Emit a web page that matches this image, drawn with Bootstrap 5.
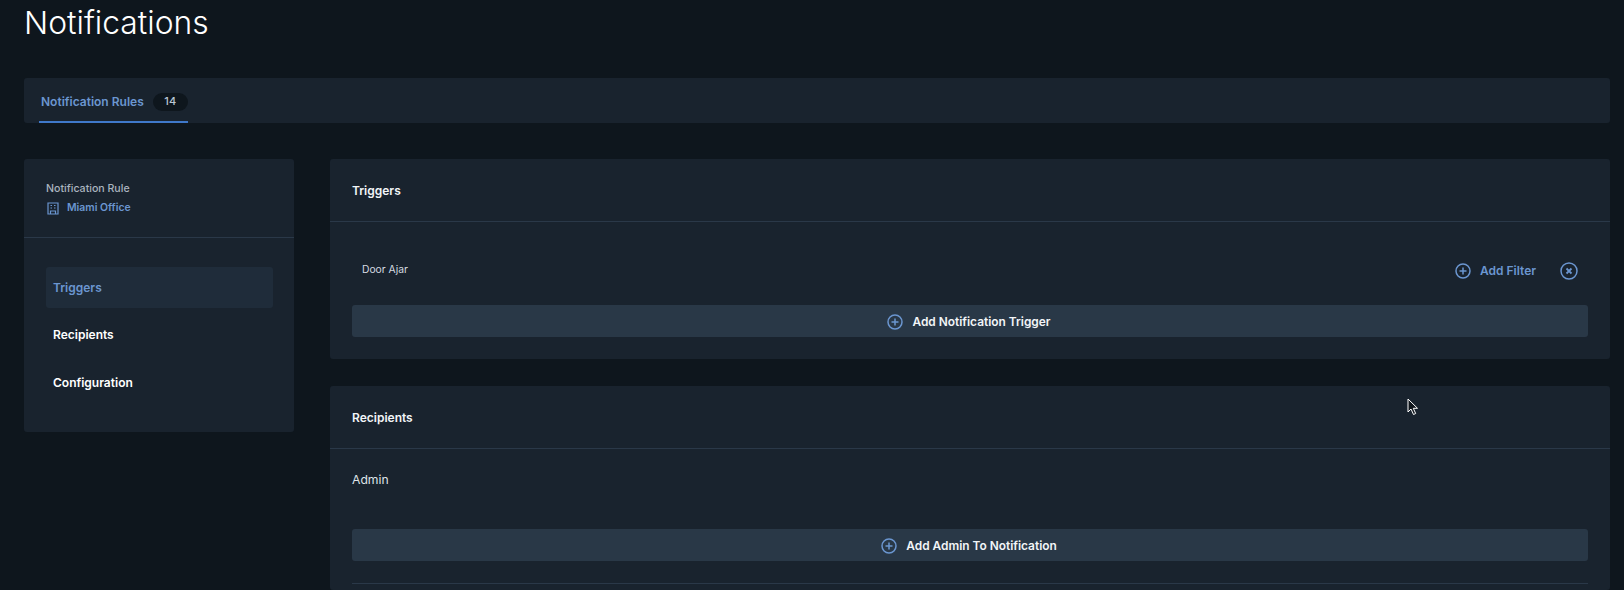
<!DOCTYPE html>
<html lang="en">
<head>
  <title>Notifications</title>
  <meta charset="utf-8">
  <meta name="viewport" content="width=device-width, initial-scale=1">
  <link href="https://cdn.jsdelivr.net/npm/bootstrap@5.3.1/dist/css/bootstrap.min.css" rel="stylesheet">
  <script src="https://cdn.jsdelivr.net/npm/bootstrap@5.3.1/dist/js/bootstrap.bundle.min.js"></script>
  <style>
    html, body {
      height: 590px;
      overflow: hidden;
    }

    body {
      background-color: #0e161d;
      color: #f2f5f8;
      font-family: "Inter", "Noto Sans", sans-serif;
      padding: 0 14px 0 24px;
      position: relative;
    }

    .page-title {
      font-size: 31.8px;
      font-weight: 300;
      line-height: 40px;
      margin: 3px 0 35px;
      color: #fff;
    }

    .panel {
      background-color: #19232e;
      border-radius: 3px;
    }

    .tab-bar {
      height: 45px;
      margin-bottom: 36px;
      padding-left: 15px;
    }

    .tab-item {
      height: 45px;
      width: 149px;
      border-bottom: 2px solid #3f78c9;
      padding: 4px 0 0 2px;
      color: #6b96d0;
      font-size: 12px;
      font-weight: 600;
      white-space: nowrap;
    }

    .count-pill {
      background-color: #0e161d;
      color: #b9c7d6;
      border-radius: 9px;
      width: 35px;
      height: 18px;
      font-size: 11px;
      font-weight: 500;
      margin-left: 9px;
    }

    .side-panel {
      width: 270px;
      height: 273px;
      flex-shrink: 0;
    }

    .side-head {
      height: 79px;
      padding: 22px 22px 0;
      border-bottom: 1px solid #2a3848;
    }

    .side-label {
      font-size: 10.6px;
      font-weight: 500;
      color: #aab4bf;
      line-height: 16px;
      margin-bottom: 3px;
    }

    .side-link {
      font-size: 10.4px;
      font-weight: 600;
      color: #6b96d0;
      line-height: 16px;
      gap: 8px;
    }

    .side-nav {
      padding: 29px 21px 0 22px;
    }

    .side-item {
      height: 41px;
      padding: 0 0 0 7px;
      margin-bottom: 6.500px;
      font-size: 12px;
      font-weight: 600;
      color: #fff;
      border-radius: 3px;
    }

    .side-item-active {
      background-color: #1f2c3a;
      color: #6b96d0;
    }

    .main-col {
      margin-left: 36px;
      width: 1280px;
    }

    .rule-card {
      margin-bottom: 27px;
    }

    .rule-card-cut {
      margin-bottom: 0;
    }

    .rule-card-cut .rule-body {
      padding-bottom: 6px;
    }

    .rule-head {
      height: 63px;
      padding: 1px 0 0 22px;
      font-size: 12px;
      font-weight: 600;
      border-bottom: 1px solid #2a3848;
    }

    .rule-row {
      height: 83px;
      padding: 12px 32px 0 32px;
      font-size: 10.3px;
      color: #d5dbe1;
    }

    .rule-actions {
      margin-top: 2px;
    }

    .rule-body {
      padding: 0 22px 22px;
    }

    .add-btn {
      background-color: #293847;
      border: 0;
      border-radius: 3px;
      color: #f2f5f8;
      height: 32px;
      width: 100%;
      font-size: 11.9px;
      font-weight: 600;
      gap: 9px;
      padding: 1px 2px 0 0;
    }

    .add-btn:hover {
      background-color: #293847;
      color: #f2f5f8;
    }

    .filter-link {
      color: #6b96d0;
      font-size: 12px;
      font-weight: 600;
      gap: 9px;
    }

    .admin-name {
      height: 80px;
      padding: 21px 0 0;
      font-size: 12.2px;
      line-height: 20px;
      color: #dfe4e9;
    }

    .body-rule {
      border-top: 1px solid #2a3848;
      margin-top: 22px;
    }

    .svg-icon {
      flex-shrink: 0;
      fill: none;
      stroke: #6b96d0;
      stroke-width: 1.500;
    }

    .building-icon {
      margin-left: 1px;
      stroke-width: 1.200;
    }

    .mouse-cursor {
      position: absolute;
      left: 1407px;
      top: 398px;
    }
  </style>
</head>
<body>

<h1 class="page-title">Notifications</h1>

<div class="panel tab-bar d-flex">
  <div class="tab-item d-flex align-items-center">
    Notification Rules
    <span class="count-pill d-inline-flex align-items-center justify-content-center">14</span>
  </div>
</div>

<div class="d-flex align-items-start">
  <!-- left menu -->
  <div class="panel side-panel">
    <div class="side-head">
      <div class="side-label">Notification Rule</div>
      <div class="side-link d-flex align-items-center">
        <svg class="svg-icon building-icon" width="12" height="13" viewBox="0 0 12 13"><path d="M1 1h10v11H1z"/><path d="M3.500 12V9h5v3"/><path d="M3.500 3.500h1.500M7 3.500h1.500M3.500 6h1.500M7 6h1.500"/></svg>
        Miami Office
      </div>
    </div>
    <div class="side-nav">
      <div class="side-item side-item-active d-flex align-items-center">Triggers</div>
      <div class="side-item d-flex align-items-center">Recipients</div>
      <div class="side-item d-flex align-items-center">Configuration</div>
    </div>
  </div>

  <div class="main-col">
    <!-- triggers -->
    <div class="panel rule-card">
      <div class="rule-head d-flex align-items-center">Triggers</div>
      <div class="rule-row d-flex align-items-center justify-content-between">
        <span>Door Ajar</span>
        <div class="rule-actions d-flex align-items-center">
          <span class="filter-link d-flex align-items-center">
            <svg class="svg-icon" width="16" height="16" viewBox="0 0 16 16"><circle cx="8" cy="8" r="7"/><path d="M8 4.500v7M4.500 8h7"/></svg>
            Add Filter
          </span>
          <svg class="svg-icon ms-4" width="18" height="18" viewBox="0 0 18 18"><circle cx="9" cy="9" r="8"/><path d="M6.500 6.500l5 5M11.500 6.500l-5 5" stroke-width="1.800"/></svg>
        </div>
      </div>
      <div class="rule-body">
        <button class="btn add-btn d-flex align-items-center justify-content-center">
          <svg class="svg-icon" width="16" height="16" viewBox="0 0 16 16"><circle cx="8" cy="8" r="7"/><path d="M8 4.500v7M4.500 8h7"/></svg>
          Add Notification Trigger
        </button>
      </div>
    </div>

    <!-- recipients, cut off by the window -->
    <div class="panel rule-card rule-card-cut">
      <div class="rule-head d-flex align-items-center">Recipients</div>
      <div class="rule-body">
        <div class="admin-name">Admin</div>
        <button class="btn add-btn d-flex align-items-center justify-content-center">
          <svg class="svg-icon" width="16" height="16" viewBox="0 0 16 16"><circle cx="8" cy="8" r="7"/><path d="M8 4.500v7M4.500 8h7"/></svg>
          Add Admin To Notification
        </button>
        <div class="body-rule"></div>
      </div>
    </div>
  </div>
</div>

<svg class="mouse-cursor" width="12" height="18" viewBox="0 0 12 18"><path d="M1 1v13l3-3 2.500 5.500 2.200-1-2.400-5.200H10.500z" fill="#10161c" stroke="#fff" stroke-width="1"/></svg>

</body>
</html>
